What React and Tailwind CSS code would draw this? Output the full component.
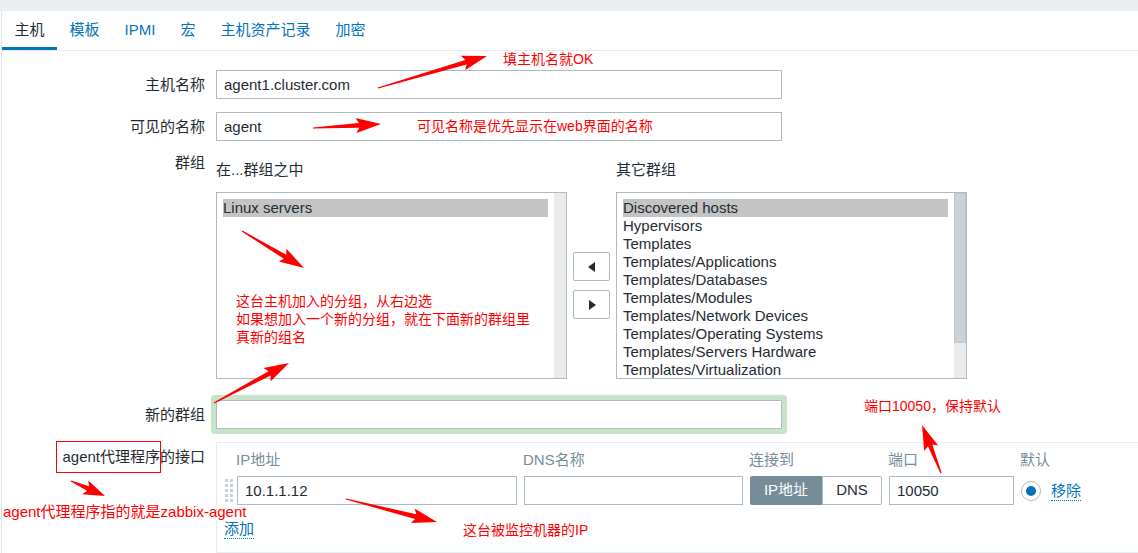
// Zabbix host form, with the red annotations laid over it

const tabs = ["主机", "模板", "IPMI", "宏", "主机资产记录", "加密"];

const otherGroups = [
  "Discovered hosts",
  "Hypervisors",
  "Templates",
  "Templates/Applications",
  "Templates/Databases",
  "Templates/Modules",
  "Templates/Network Devices",
  "Templates/Operating Systems",
  "Templates/Servers Hardware",
  "Templates/Virtualization",
];

// tapered red arrow, as drawn by a screenshot tool
const arrowPoints = (x1, y1, x2, y2) => {
  const dx = x2 - x1, dy = y2 - y1;
  const L = Math.hypot(dx, dy);
  const ux = dx / L, uy = dy / L;
  const nx = -uy, ny = ux;
  const h = Math.min(22, L * 0.5);
  const bx = x2 - ux * h, by = y2 - uy * h;
  const w0 = 0.6, w1 = 2.4, hw = 7.5;
  const pts = [
    [x1 + nx * w0, y1 + ny * w0],
    [bx + nx * w1, by + ny * w1],
    [bx - ux * 3 + nx * hw, by - uy * 3 + ny * hw],
    [x2, y2],
    [bx - ux * 3 - nx * hw, by - uy * 3 - ny * hw],
    [bx - nx * w1, by - ny * w1],
    [x1 - nx * w0, y1 - ny * w0],
  ];
  return pts.map((p) => p.map((v) => v.toFixed(1)).join(",")).join(" ");
};

const arrows = [
  [378, 88, 487, 56],
  [313, 128, 381, 124],
  [242, 231, 304, 268],
  [214, 403, 289, 363],
  [941, 473, 922, 425],
  [71, 481, 105, 496],
  [346, 499, 437, 522],
];

const Row = ({ label, labelCls = "items-center", children, className = "" }) => (
  <div className={`flex ${labelCls} ${className}`}>
    <div className="w-[203px] shrink-0 text-right leading-[18px] whitespace-nowrap">{label}</div>
    <div className="ml-[11px] shrink-0">{children}</div>
  </div>
);

const TextInput = ({ value = "", w }) => (
  <div className={`${w} shrink-0 h-[29px] border border-[#acbbc2] bg-white px-[7px] flex items-center leading-[18px]`}>
    {value}
  </div>
);

const ListBox = ({ items, selected, thumb }) => (
  <div className="flex w-[351px] h-[187px] border border-[#acbbc2] bg-white">
    <div className="flex-1 pt-[6px] px-[6px] overflow-hidden leading-[18px]">
      {items.map((it) => (
        <div key={it} className={`whitespace-nowrap ${it === selected ? "bg-[#c4c4c4]" : ""}`}>
          {it}
        </div>
      ))}
    </div>
    <div className="w-[12px] flex flex-col bg-[#ebebeb]">
      {thumb && <div className="h-[150px] bg-[#c8d2d8] border border-[#bcc7cd]" />}
    </div>
  </div>
);

const MoveBtn = ({ dir }) => (
  <div className="w-[37px] h-[29px] border border-[#acbbc2] rounded-[2px] bg-white flex items-center justify-center">
    <svg width="8" height="10" viewBox="0 0 8 10">
      {dir === "left" ? (
        <polygon points="7,0 7,10 0,5" fill="#1f2c33" />
      ) : (
        <polygon points="1,0 1,10 8,5" fill="#1f2c33" />
      )}
    </svg>
  </div>
);

const DragHandle = () => (
  <svg width="8" height="23" viewBox="0 0 8 23">
    {[0, 5, 10, 15, 20].map((y) =>
      [0, 5].map((x) => <rect key={`${x}-${y}`} x={x} y={y} width="3" height="3" fill="#c9d2d7" />)
    )}
  </svg>
);

export default function App() {
  return (
    <div className="relative w-[1138px] h-[553px] overflow-hidden bg-white font-['Liberation_Sans','Noto_Sans_CJK_SC',sans-serif] text-[15px] text-[#1f2c33]">
      <div className="h-[11px] bg-[#ebeef0]" />
      <div className="ml-[1px] border-l border-[#dfe4e7] h-[542px]">
        {/* tabs */}
        <div className="flex h-[40px] border-b border-[#e5e9ec]">
          {tabs.map((t, i) => (
            <div
              key={t}
              className={`h-[39px] px-[12.5px] flex items-center ${
                i === 0 ? "text-[#1f2c33] shadow-[inset_0_-3px_0_#0275b8]" : "text-[#0275b8]"
              }`}
            >
              {t}
            </div>
          ))}
        </div>

        {/* form */}
        <div className="pt-[19px]">
          <Row label="主机名称">
            <TextInput value="agent1.cluster.com" w="w-[566px]" />
          </Row>
          <Row label="可见的名称" className="mt-[13px]">
            <TextInput value="agent" w="w-[566px]" />
          </Row>

          <Row label="群组" labelCls="items-start" className="mt-[13px]">
            <div className="pt-[7px] flex leading-[18px]">
              <div className="w-[400px]">在...群组之中</div>
              <div>其它群组</div>
            </div>
            <div className="mt-[13px] flex gap-[6px]">
              <ListBox items={["Linux servers"]} selected="Linux servers" />
              <div className="flex flex-col justify-center gap-[9px]">
                <MoveBtn dir="left" />
                <MoveBtn dir="right" />
              </div>
              <ListBox items={otherGroups} selected="Discovered hosts" thumb />
            </div>
          </Row>

          <Row label="新的群组" className="mt-[21px]">
            <div className="w-[566px] h-[29px] border border-[#acbbc2] bg-white rounded-[1px] shadow-[0_0_0_5px_#c7e3ca]" />
          </Row>

          <Row label={<div className="pt-[6px]">agent代理程序的接口</div>} labelCls="items-start" className="mt-[13px]">
            <div className="w-[940px] h-[111px] border-y border-l border-[#ebeef0]">
              <div className="pt-[8px] flex leading-[18px] text-[#768d99]">
                <div className="w-[19px] shrink-0" />
                <div className="w-[287px] shrink-0">IP地址</div>
                <div className="w-[226px] shrink-0">DNS名称</div>
                <div className="w-[139px] shrink-0">连接到</div>
                <div className="w-[132px] shrink-0">端口</div>
                <div>默认</div>
              </div>
              <div className="mt-[7px] flex items-center">
                <div className="w-[20px] shrink-0 pl-[8px] flex">
                  <DragHandle />
                </div>
                <TextInput value="10.1.1.12" w="w-[280px]" />
                <div className="ml-[7px]">
                  <TextInput w="w-[219px]" />
                </div>
                <div className="ml-[7px] flex">
                  <div className="w-[72px] h-[29px] bg-[#768d99] text-white rounded-l-[2px] flex items-center justify-center">
                    IP地址
                  </div>
                  <div className="w-[60px] h-[29px] border border-[#acbbc2] rounded-r-[2px] flex items-center justify-center">
                    DNS
                  </div>
                </div>
                <div className="ml-[7px]">
                  <TextInput value="10050" w="w-[125px]" />
                </div>
                <div className="ml-[7px] shrink-0 w-[20px] h-[20px] rounded-full border border-[#acbbc2] flex items-center justify-center">
                  <div className="w-[10px] h-[10px] rounded-full bg-[#0275b8]" />
                </div>
                <span className="ml-[10px] pt-[2px] leading-[18px] text-[#0275b8] border-b border-dotted border-[#0275b8]">
                  移除
                </span>
              </div>
              <div className="mt-[15px] pl-[7px] flex">
                <span className="leading-[18px] text-[#0275b8] border-b border-dotted border-[#0275b8]">添加</span>
              </div>
            </div>
          </Row>
        </div>
      </div>

      {/* annotations */}
      <svg className="absolute inset-0 pointer-events-none" width="1138" height="553">
        {arrows.map((a, i) => (
          <polygon key={i} points={arrowPoints(...a)} fill="#ff0000" />
        ))}
      </svg>
      <div className="absolute left-[56px] top-[441px] w-[105px] h-[32px] border border-[#ff0000]" />
      <div className="absolute left-[503px] top-[50px] text-[14px] leading-[18px] text-[#ff0000]">填主机名就OK</div>
      <div className="absolute left-[417px] top-[117px] text-[14px] leading-[18px] text-[#ff0000] whitespace-nowrap">
        可见名称是优先显示在web界面的名称
      </div>
      <div className="absolute left-[236px] top-[292px] text-[14px] leading-[18px] text-[#ff0000] whitespace-nowrap">
        <div>这台主机加入的分组，从右边选</div>
        <div>如果想加入一个新的分组，就在下面新的群组里</div>
        <div>真新的组名</div>
      </div>
      <div className="absolute left-[864px] top-[397px] text-[14px] leading-[18px] text-[#ff0000] whitespace-nowrap">
        端口10050，保持默认
      </div>
      <div className="absolute left-[3px] top-[503px] text-[15px] leading-[18px] text-[#ff0000] whitespace-nowrap">
        agent代理程序指的就是zabbix-agent
      </div>
      <div className="absolute left-[463px] top-[521px] text-[14px] leading-[18px] text-[#ff0000] whitespace-nowrap">
        这台被监控机器的IP
      </div>
    </div>
  );
}
